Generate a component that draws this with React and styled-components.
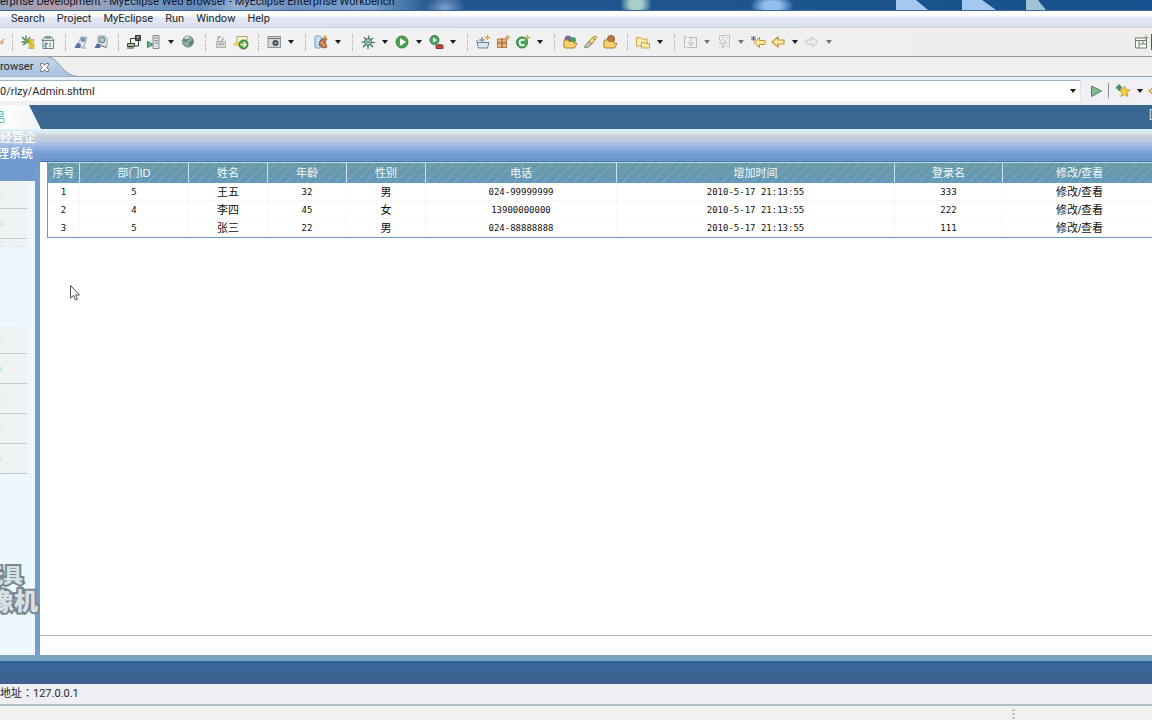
import React from "react";
import styled, { createGlobalStyle } from "styled-components";

const GlobalStyle = createGlobalStyle`
    * {
        box-sizing: border-box;
    }
    body {
        margin: 0;
        overflow: hidden;
        font-family: Roboto, "Noto Sans CJK SC", sans-serif;
        font-size: 11px;
        color: #26282e;
        background: #f0f0ee;
    }
    button, input {
        font: inherit;
        color: inherit;
        padding: 0;
        border: none;
        background: none;
    }
`;

const Window = styled.div`
    position: relative;
    display: flex;
    flex-direction: column;
    height: 100vh;
    overflow: hidden;
`;

/* window frame */

const TitleBar = styled.header`
    display: flex;
    align-items: flex-end;
    height: 11px;
    overflow: hidden;
    color: #101828;
    border-bottom: 1px solid #3d6796;
    background:
        radial-gradient(ellipse 20px 14px at 445px 8px, #7f9fcb, transparent),
        radial-gradient(ellipse 16px 14px at 636px 4px, #a9cdc9 40%, transparent),
        radial-gradient(ellipse 22px 12px at 772px 6px, #93bdec 40%, transparent),
        linear-gradient(90deg, #8fa6c2 0, #b59aa8 50px, #a5a3b8 80px, #7e9cc4 130px, #5f8abb 200px, #9ab0cd 235px, #6c93c4 290px, #7aa0cd 370px, #23588f 430px, #17508c 100%);
`;
const TitleText = styled.span`
    line-height: 16px;
    white-space: nowrap;
`;
const TitleGlows = styled.svg`
    flex: none;
    width: 150px;
    height: 10px;
    margin-left: auto;
    margin-right: 106px;
`;
const MenuBar = styled.nav`
    display: flex;
    align-items: center;
    gap: 12px;
    height: 17px;
    padding-left: 11px;
    background: linear-gradient(#fff 0, #fff 25%, #e3e9f3 45%, #d8deee 100%);
    border-bottom: 1px solid #cdd2dd;
`;
const MenuItem = styled.button`
    line-height: 16px;
`;
const Toolbar = styled.div`
    display: flex;
    align-items: center;
    height: 29px;
    background: linear-gradient(90deg, #f3f2f5, #efeeec);
    border-bottom: 1px solid #9b9b9b;
`;
const ToolButton = styled.button`
    display: flex;
    align-items: center;
    justify-content: center;
    flex: none;
    width: 20px;
    height: 20px;
    overflow: hidden;
    opacity: ${props => props.$faded ? 0.55 : 1};

    svg {
        flex: none;
        width: 16px;
        height: 16px;
    }
`;
const EdgeButton = styled(ToolButton)`
    justify-content: ${props => props.$side === "left" ? "flex-end" : "flex-start"};
    width: 5px;
`;
const ArrowButton = styled.button`
    flex: none;
    width: 14px;
    height: 20px;

    &:before {
        content: "";
        display: block;
        width: 0;
        margin: 0 auto;
        border: 3px solid transparent;
        border-top: 4px solid ${props => props.$faded ? "#77777a" : "#1c1c1e"};
        border-bottom: none;
    }
`;
const Grip = styled.span`
    flex: none;
    width: 13px;
    height: 17px;
    padding-left: 7px;

    &:before {
        content: "";
        display: block;
        height: 100%;
        border-left: 1px dotted #a5a5a0;
    }
`;
const Perspective = styled.div`
    display: flex;
    align-items: center;
    margin-left: auto;
    height: 16px;
    border-right: 1px solid #555;
`;

const TabRow = styled.div`
    display: flex;
    height: 20px;
    background: #f0efee;
    border-bottom: 1px solid #97a0a8;
`;
const Tab = styled.div`
    position: relative;
    display: flex;
    align-items: center;
    gap: 6px;
    width: 78px;
    height: 20px;

    & > svg {
        position: absolute;
        left: 0;
        top: 0;
    }
`;
const TabLabel = styled.span`
    position: relative;
    line-height: 18px;
`;
const CloseButton = styled.button`
    position: relative;
    display: flex;
`;

const AddressRow = styled.div`
    display: flex;
    align-items: center;
    height: 28px;
    padding-top: 3px;
    padding-bottom: 4px;
    background: #f0f0f4;
    box-shadow: inset 0 3px #e8f1f8;
`;
const AddressBox = styled.div`
    display: flex;
    align-items: center;
    flex: 1;
    height: 21px;
    margin-right: 5px;
    background: #fff;
    border-top: 1px solid #9db6c6;
    border-right: 1px solid #dde3e8;
`;
const AddressInput = styled.input`
    flex: 1;
    min-width: 0;
    height: 18px;
    outline: none;
`;
const Divider = styled.span`
    width: 1px;
    height: 15px;
    margin: 0 4px 0 2px;
    background: #8b8b8b;
`;

/* page inside the browser */

const SiteHeader = styled.div`
    display: flex;
    justify-content: space-between;
    height: 24px;
    line-height: 20px;
    background: #396791;
    color: #dfeaf5;
`;
const Logo = styled.div`
    display: flex;
    align-items: center;
    width: 41px;
    height: 24px;
    background: linear-gradient(90deg, #fff, #f0f4f5);
    clip-path: polygon(0 0, 29px 0, 41px 100%, 0 100%);
`;
const Banner = styled.div`
    height: 32px;
    padding-top: 1px;
    background: linear-gradient(#dff3fb 0, #d6e6ec 12%, #cbd2d6 22%, #bccae0 36%, #a5bce6 50%, #84a7da 66%, #719bd0 82%, #7099cd 100%);
`;
const SiteName = styled.div`
    display: flex;
    flex-direction: column;
    align-items: flex-end;
    width: ${props => props.$width};
    font-size: 12px;
    font-weight: 500;
    line-height: 16px;
    color: #fff;
    white-space: nowrap;
`;
const Body = styled.div`
    display: flex;
    flex: 1;
    min-height: 0;
`;
const Sidebar = styled.aside`
    position: relative;
    flex: none;
    width: 40px;
    padding-top: 20px;
    background: linear-gradient(#7099cd 20px, transparent 20px), #ecf7fe;
    border-right: 5px solid #769dca;
`;
const NavList = styled.ul`
    list-style: none;
    width: 27px;
    margin: 0 0 80px;
    padding: 0;
`;
const NavItem = styled.li`
    display: flex;
    align-items: center;
    height: ${props => props.$height || "30px"};
    background: linear-gradient(90deg, #eef2f2, #f0f3f3);
    border-bottom: 1px solid ${props => props.$soft ? "#dfe8ec" : "#c3cbce"};

    &:before {
        content: "";
        width: 2px;
        height: 4px;
        background: ${props => props.$mark || "#dcefef"};
    }
`;
const Watermark = styled.div`
    position: absolute;
    left: 0;
    bottom: 40px;
    display: flex;
    flex-direction: column;
    align-items: flex-end;
    width: 40px;
    overflow: hidden;
    padding-right: 2px;
    font-weight: 900;
    white-space: nowrap;
    color: #d9e1e6;
    -webkit-text-stroke: 4px #77868f;
    paint-order: stroke fill;
`;
const WatermarkLine = styled.span`
    font-size: ${props => props.$small ? "20px" : "24px"};
    line-height: 26px;
    padding-right: ${props => props.$small ? "15px" : "0"};
`;
const Content = styled.main`
    display: flex;
    flex-direction: column;
    flex: 1;
    min-width: 0;
    overflow: hidden;
    background: #fff;
    border-top: 1px solid #4672ab;
`;
const TableArea = styled.div`
    flex: 1;
    padding-left: 7px;
    margin-right: -6px;
`;
const ContentFooter = styled.div`
    height: 20px;
    background: #fdfefc;
    border-top: 1px solid #b5b9b5;
`;

const Table = styled.table`
    width: 100%;
    table-layout: fixed;
    border-spacing: 0;
    border: 1px solid #6d9cba;
    border-top: none;
    font-family: "Liberation Sans", "Noto Sans CJK SC", sans-serif;
    text-align: center;
    color: #111;
`;
const HeadRow = styled.tr`
    background:
        repeating-linear-gradient(135deg, rgba(255, 255, 255, 0.07) 0 2px, transparent 2px 7px),
        linear-gradient(#6c9ca3, #6898ab 40%, #6499bd);
`;
const HeadCell = styled.th`
    height: 21px;
    padding: 0;
    border-top: 1px solid #b9dcea;
    border-right: 1px solid #c4e4ef;
    font-size: 11px;
    font-weight: 400;
    line-height: 18px;
    color: #f2fbfd;
`;
const Cell = styled.td`
    height: 18px;
    padding: 0;
    border-right: 1px solid #f6f6f6;
    border-bottom: 1px solid #f7f7f6;
    font-family: ${props => props.$digits ? '"DejaVu Sans Mono", monospace' : "inherit"};
    font-size: ${props => props.$digits ? "9px" : "11px"};
    line-height: 16px;
    white-space: nowrap;
`;
const EditLink = styled.a`
    color: inherit;
    text-decoration: none;
`;

const BottomBar = styled.div`
    height: 29px;
    border-top: 6px solid #7aa2c2;
    background: linear-gradient(#33689a, #3a6594 50%, #42608f);
`;
const AddressStatus = styled.div`
    height: 22px;
    background: #edeff2;
    border-bottom: 2px solid #b3bfc6;
    font-family: Roboto, "Noto Sans CJK TC", sans-serif;
    line-height: 20px;
    white-space: nowrap;
`;
const StatusLine = styled.footer`
    display: flex;
    justify-content: flex-end;
    height: 14px;
    padding: 3px 136px 0 0;
    background: #f0f0ee;
`;
const Pointer = styled.svg`
    position: absolute;
    left: 69px;
    top: 284px;
`;

const Icon = ({ children }) => (
    <svg viewBox="0 0 16 16" width="16" height="16" fill="none" aria-hidden="true">
        {children}
    </svg>
);

const spark = <path d="M12.5 1v5M10 3.500h5" stroke="#e0a32c" strokeWidth="1.300" />;
const folder = <path d="M2 13V6h4l1 1.500h5V9l3 .5-2.500 4.500H3z" fill="#f4d36e" stroke="#ae7d25" />;

const icons = {
    brush: <path d="M10 10l5-5M12 10l3-2" stroke="#e0a070" strokeWidth="1.500" />,
    deploy: (
        <>
            <path d="M2 3l3 3M6 1.500V6M1.500 8H6M10 3L8 6M3 11l3-2" stroke="#3c7a62" strokeWidth="1.300" />
            <circle cx="7" cy="7" r="2.500" fill="#79a83e" />
            <path d="M10 5.500h4v2h-3v2h3v5H9v-2h3v-1.500H9z" fill="#f0cf23" stroke="#b9921a" strokeWidth=".6" />
        </>
    ),
    calendar: (
        <>
            <path d="M2 6.500C4 1 12 1 14 6.500z" fill="#dce7df" stroke="#61856e" />
            <path d="M3 6.500h10.500v8H3z" fill="#eef2f3" stroke="#6e8188" />
            <path d="M5 9h2v1.500H5V13h2M10 8.500V13M5 4h6" stroke="#4d7480" />
        </>
    ),
    editPage: (
        <>
            <path d="M4 13L8 3h6l-3 10z" fill="#e4e9ef" stroke="#a5afb9" />
            <circle cx="10" cy="5.500" r="2.500" fill="#7395b9" />
            <path d="M1.500 14l2.500-5 4 1-1 4z" fill="#5a75a0" />
            <path d="M8 14h5" stroke="#9da5ab" />
        </>
    ),
    findPage: (
        <>
            <path d="M5 2h7l2 3v7H5z" fill="#e5ecee" stroke="#96a2a8" />
            <circle cx="9" cy="6" r="3" fill="#a8c4c8" stroke="#5a817f" />
            <path d="M1.500 14l2.500-4.500 4 1-1 3.500z" fill="#53719d" />
            <path d="M9 12l5 2" stroke="#7b8792" />
        </>
    ),
    server: (
        <>
            <path d="M9.500 1.500h5v5h-5z" fill="#54585c" stroke="#303336" />
            <path d="M11 3h2" stroke="#e9e9e9" />
            <path d="M1.500 9.500h7v3h-7z" fill="#b6bd93" stroke="#37413b" />
            <path d="M1 14h7M4.500 9V4.500H9M12.500 7v5H9" stroke="#303d35" />
        </>
    ),
    serverRun: (
        <>
            <path d="M7 1.500h6v13H7z" fill="#dfe3e4" stroke="#868d8e" />
            <path d="M8.500 4H12M8.500 6.500H12M8.500 9H12" stroke="#768183" />
            <path d="M1.500 7.500v6L7 10.500z" fill="#6bbc82" stroke="#377c4d" />
        </>
    ),
    globe: (
        <>
            <circle cx="8" cy="7.500" r="5.500" fill="#8fabac" stroke="#6a857a" />
            <path d="M4 4l4-2 1 3-3 3-3-1zM9 8l4-2-1 5-3 1z" fill="#54906a" />
            <path d="M5 5c1-1.500 2-2 4-1.500" stroke="#e2edf0" strokeWidth="2" />
        </>
    ),
    openTool: (
        <>
            <path d="M3.500 7.500h9v6h-9z" fill="#d9d9d6" stroke="#b0b0ad" />
            <path d="M5 7V3h3M8 7l3-3M5 10h6" stroke="#aaa" strokeWidth="1.300" />
        </>
    ),
    exportPage: (
        <>
            <path d="M4 2.500h10v8H4z" fill="#fbf3cd" stroke="#b5a267" />
            <path d="M1 8h5v4H1z" fill="#efd36b" />
            <circle cx="10.500" cy="10.500" r="4.500" fill="#51a539" stroke="#39792b" />
            <path d="M7.500 10.500h5M10.500 8l2.500 2.500-2.500 2.500" stroke="#fff" strokeWidth="1.500" />
        </>
    ),
    camera: (
        <>
            <path d="M2 2.500h12.500v11H2z" fill="#d6d9dc" stroke="#8b9196" />
            <path d="M2 4.500h12" stroke="#6c737a" />
            <circle cx="9.500" cy="9" r="3" fill="#454d56" />
            <circle cx="9.500" cy="9" r="1.200" fill="#9eafbc" />
        </>
    ),
    database: (
        <>
            <path d="M2 3c0-1.500 6-1.500 6 0v10c0 1.500-6 1.500-6 0z" fill="#c8e1f2" stroke="#6e9fc4" />
            <path d="M7 7l3-3 4 1-2 3 2 5-4 1-4-3z" fill="#bd7651" stroke="#8d6049" />
            <path d="M8 8l4 4M12 1v4M10 3h4" stroke="#e8ad38" strokeWidth="1.300" />
        </>
    ),
    bug: (
        <>
            <path d="M4 3l2 3M9 1.500L8.500 5M13 4l-3 2M1.500 8H5M11 8.500h4M3 13l3-3M8 11.500V15M13 13l-3-3" stroke="#346a5b" strokeWidth="1.200" />
            <circle cx="8" cy="8" r="3.500" fill="#a0c9a0" stroke="#367360" />
            <path d="M6 8h4" stroke="#518b7b" />
        </>
    ),
    run: (
        <>
            <circle cx="8" cy="8" r="6" fill="#4ba34f" stroke="#37823e" />
            <path d="M6 4l6 4-6 4z" fill="#fff" />
        </>
    ),
    runExternal: (
        <>
            <circle cx="6.500" cy="6" r="4.500" fill="#4ba35c" stroke="#377f4b" />
            <path d="M5 3.500L9 6 5 8.500z" fill="#fff" />
            <path d="M8 11h7v3.500H8z" fill="#b84b3b" stroke="#813e34" />
            <path d="M10 10.500h3" stroke="#8c4638" />
        </>
    ),
    newProject: (
        <>
            <path d="M2 8.500h12L12.500 14h-9z" fill="#d9e9f4" stroke="#61809e" />
            <path d="M7 9V3M4 6h6M2 8V6" stroke="#67737a" />
            {spark}
        </>
    ),
    newPackage: (
        <>
            <path d="M2.500 5h9v8.500h-9z" fill="#e9b67d" stroke="#b87e4e" />
            <path d="M7 4v10M2 9h10" stroke="#8f5c3e" />
            {spark}
        </>
    ),
    newClass: (
        <>
            <circle cx="7" cy="8.500" r="5.500" fill="#4da35b" stroke="#2d8147" />
            <path d="M9.500 6.500c-1.500-1.800-5-.5-5 2s3.500 3.600 5 2" stroke="#fff" strokeWidth="1.800" />
            {spark}
        </>
    ),
    openType: (
        <>
            <circle cx="6" cy="5" r="3.500" fill="#7768a0" />
            <circle cx="11" cy="6" r="3" fill="#4f9a66" />
            {folder}
        </>
    ),
    search: (
        <>
            <path d="M6 8l6-6 3 1-5 7z" fill="#f2d985" stroke="#b39449" />
            <path d="M2 13l5-6 3 3-5 4z" fill="#c3c0ad" stroke="#8a8671" />
            <path d="M11 4l2 2" stroke="#796b43" />
        </>
    ),
    openTask: (
        <>
            <circle cx="9" cy="5" r="3.500" fill="#bd7645" stroke="#8b5431" />
            {folder}
        </>
    ),
    folders: (
        <>
            <path d="M1.500 12V3.500h4l1 1.500H12v7z" fill="#f8e9b2" stroke="#c9a54f" />
            <path d="M6.500 14V8.500h3l1 1h4V14z" fill="#fae9a8" stroke="#c9a54f" />
        </>
    ),
    nextNote: (
        <>
            <path d="M2.500 2v12M6.500 3.500h8v10h-10M2 3h3" stroke="#8c9099" />
            <path d="M9 4v6M6 8l3 4 3-4" fill="#e2e4ea" stroke="#9599a5" />
        </>
    ),
    prevNote: (
        <>
            <path d="M3.500 6V1.500h10v11H10M6 3h2M10 4h2" stroke="#9b9da3" />
            <path d="M6 14V9H3l4-4 4 4H8v5z" fill="#e9eaee" stroke="#9a9ca5" />
        </>
    ),
    lastEdit: (
        <>
            <path d="M15 6.500H9.500V3.500L4 8.500l5.500 5v-3H15z" fill="#fbe89b" stroke="#c29232" />
            <path d="M3.500 2v5M1 3l5 3M6 3L1 6" stroke="#466a93" />
        </>
    ),
    back: <path d="M14 6H8V3L2 8l6 5v-3h6z" fill="#fceca5" stroke="#c29232" strokeWidth="1.200" />,
    forward: <path d="M2 6h6V3l6 5-6 5v-3H2z" fill="#eee" stroke="#a2a2a2" />,
    perspective: (
        <>
            <path d="M2.500 4h11v10h-11z" fill="#fff" stroke="#71816a" />
            <path d="M2.500 6.500h11M6 6.500V14M6 10h7.500M10 6.500V10" stroke="#658375" />
            <path d="M13 1v5M10.500 3.500h5" stroke="#8a9e72" />
        </>
    ),
    go: <path d="M3.500 3v10.500L13.500 8z" fill="#81ba8d" stroke="#4e8162" />,
    favorite: (
        <>
            <path d="M9.500 3l1.500 3.500 4 .5-3 2.500 1 4-3.500-2-3.500 2 1-4L4 7l4-.5z" fill="#f6d344" stroke="#cf9b2b" />
            <path d="M4 1.500v6M1 4.500h6" stroke="#3f9157" strokeWidth="2.500" />
        </>
    ),
};

// "|" is a group grip, "v" after a name adds the drop-down arrow
const tools = [
    "|", "deploy", "calendar", "|", "editPage", "findPage", "|", "server", "serverRun v", "globe",
    "|", "openTool", "exportPage", "|", "camera v", "|", "database v", "|", "bug v", "run v",
    "runExternal v", "|", "newProject", "newPackage", "newClass v", "|", "openType", "search",
    "openTask", "|", "folders v", "|", "nextNote v", "prevNote v", "lastEdit", "back v", "forward v",
];
const disabledTools = ["nextNote", "prevNote", "forward"];

const menus = ["Search", "Project", "MyEclipse", "Run", "Window", "Help"];

const columns = [
    { title: "序号", width: "32px" },
    { title: "部门ID", width: "109px" },
    { title: "姓名", width: "79px" },
    { title: "年龄", width: "79px" },
    { title: "性别", width: "79px" },
    { title: "电话", width: "191px" },
    { title: "增加时间", width: "auto" },
    { title: "登录名", width: "108px" },
    { title: "修改/查看", width: "154px" },
];
const Column = styled.col`
    width: ${props => props.$width};
`;

const people = [
    ["1", "5", "王五", "32", "男", "024-99999999", "2010-5-17 21:13:55", "333"],
    ["2", "4", "李四", "45", "女", "13900000000", "2010-5-17 21:13:55", "222"],
    ["3", "5", "张三", "22", "男", "024-88888888", "2010-5-17 21:13:55", "111"],
];

const Tool = ({ name }) => {
    if (name === "|") return <Grip />;
    const [icon, arrow] = name.split(" ");
    const faded = disabledTools.includes(icon);
    return (
        <>
            <ToolButton aria-label={icon} $faded={faded}>
                <Icon>{icons[icon]}</Icon>
            </ToolButton>
            {arrow && <ArrowButton aria-label={icon + " menu"} $faded={faded} />}
        </>
    );
};

const PeopleTable = () => (
    <Table>
        <colgroup>
            {columns.map(c => <Column key={c.title} $width={c.width} />)}
        </colgroup>
        <thead>
            <HeadRow>
                {columns.map(c => <HeadCell key={c.title}>{c.title}</HeadCell>)}
            </HeadRow>
        </thead>
        <tbody>
            {people.map(row => (
                <tr key={row[0]}>
                    {row.map((value, i) => (
                        <Cell key={i} $digits={/^\d/.test(value)}>{value}</Cell>
                    ))}
                    <Cell>
                        <EditLink href="#edit">修改/查看</EditLink>
                    </Cell>
                </tr>
            ))}
        </tbody>
    </Table>
);

const App = () => (
    <>
        <GlobalStyle />
        <Window>
            <TitleBar>
                <TitleText>erprise Development - MyEclipse Web Browser - MyEclipse Enterprise Workbench</TitleText>
                <TitleGlows viewBox="0 0 150 10" aria-hidden="true">
                    <path d="M0 0h20l12 10H0z" fill="#a4c8f0" />
                    <path d="M66 0h20l14 10H66z" fill="#a4c8f0" />
                    <path d="M130 0h12l8 10h-20z" fill="#9fc3d3" />
                </TitleGlows>
            </TitleBar>
            <MenuBar>
                {menus.map(m => <MenuItem key={m}>{m}</MenuItem>)}
            </MenuBar>
            <Toolbar>
                <EdgeButton $side="left" aria-label="brush">
                    <Icon>{icons.brush}</Icon>
                </EdgeButton>
                {tools.map((t, i) => <Tool key={i} name={t} />)}
                <Perspective>
                    <ToolButton aria-label="perspective">
                        <Icon>{icons.perspective}</Icon>
                    </ToolButton>
                </Perspective>
            </Toolbar>
            <TabRow>
                <Tab>
                    <svg width="78" height="20" aria-hidden="true">
                        <defs>
                            <linearGradient id="tab" x1="0" y1="0" x2="0" y2="1">
                                <stop offset="0" stopColor="#c3d4e8" />
                                <stop offset="1" stopColor="#a9c2de" />
                            </linearGradient>
                        </defs>
                        <path d="M0 0h48c10 0 14 19 30 19.500H0z" fill="url(#tab)" />
                        <path d="M48 0c10 0 14 19 30 19.500" fill="none" stroke="#8c98a6" />
                    </svg>
                    <TabLabel>rowser</TabLabel>
                    <CloseButton aria-label="close">
                        <svg width="11" height="11" fill="#fff" stroke="#6e7884" aria-hidden="true">
                            <path d="M1.500 1.500H4L5.500 3.500 7 1.500h2.500v2l-2 2 2 2v2H7L5.500 7.500 4 9.500H1.500v-2l2-2-2-2z" />
                        </svg>
                    </CloseButton>
                </Tab>
            </TabRow>
            <AddressRow>
                <AddressBox>
                    <AddressInput aria-label="address" defaultValue="0/rlzy/Admin.shtml" />
                    <ArrowButton aria-label="history" />
                </AddressBox>
                <ToolButton aria-label="go"><Icon>{icons.go}</Icon></ToolButton>
                <Divider />
                <ToolButton aria-label="favorite"><Icon>{icons.favorite}</Icon></ToolButton>
                <ArrowButton aria-label="favorites menu" />
                <EdgeButton $side="right" aria-label="back">
                    <Icon>{icons.back}</Icon>
                </EdgeButton>
            </AddressRow>
            <SiteHeader>
                <Logo>
                    <svg width="6" height="14" fill="none" stroke="#4fb9c5" aria-hidden="true">
                        <path d="M0 1.500h3v5H0M0 8.500h4v4H0M0 4h3" />
                    </svg>
                </Logo>
                <span>[</span>
            </SiteHeader>
            <Banner>
                <SiteName $width="36px"><span>经营企</span></SiteName>
                <SiteName $width="33px"><span>理系统</span></SiteName>
            </Banner>
            <Body>
                <Sidebar>
                    <NavList>
                        <NavItem $height="28px" />
                        <NavItem $mark="#bff0ea" />
                        <NavItem $height="8px" $soft />
                    </NavList>
                    <NavList>
                        <NavItem $height="27px" />
                        <NavItem $mark="#a8f3ea" />
                        <NavItem />
                        <NavItem />
                        <NavItem $mark="#c5eeee" />
                    </NavList>
                    <Watermark>
                        <WatermarkLine $small>玩具</WatermarkLine>
                        <WatermarkLine>录像机</WatermarkLine>
                    </Watermark>
                </Sidebar>
                <Content>
                    <TableArea>
                        <PeopleTable />
                    </TableArea>
                    <ContentFooter />
                </Content>
            </Body>
            <BottomBar />
            <AddressStatus>地址：127.0.0.1</AddressStatus>
            <StatusLine>
                <svg width="4" height="11" stroke="#b5b5b5" aria-hidden="true">
                    <path d="M1.500 0v11" strokeWidth="2" strokeDasharray="2 2" />
                </svg>
            </StatusLine>
            <Pointer width="12" height="18" viewBox="0 0 12 18" aria-hidden="true">
                <path d="M1.500 1.500v12.500l3-2.500 2 4.500 2-1-2-4h4z" fill="#fff" stroke="#4c4c4c" />
            </Pointer>
        </Window>
    </>
);

export default App;
